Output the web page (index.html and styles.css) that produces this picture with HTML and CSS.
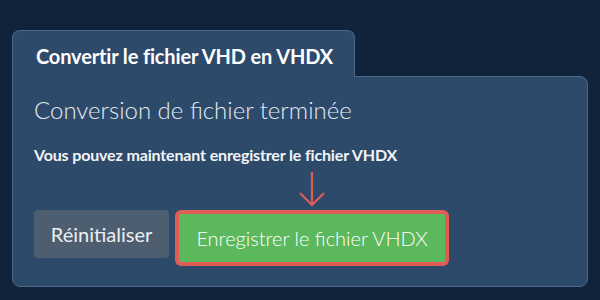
FILE: index.html
```html
<!DOCTYPE html>
<html lang="fr">
<head>
    <meta charset="UTF-8">
    <title>Convertir le fichier VHD en VHDX</title>
    <link rel="stylesheet" href="styles.css">
</head>
<body>
    <div class="converter">
        <div class="tab">Convertir le fichier VHD en VHDX</div>
        <div class="panel">
            <h2 class="status">Conversion de fichier terminée</h2>
            <p class="hint">Vous pouvez maintenant enregistrer le fichier VHDX</p>
            <div class="actions">
                <button class="btn btn-reset">Réinitialiser</button>
                <div class="save-wrap">
                    <svg class="arrow" width="28" height="36" viewBox="0 0 28 36">
                        <path d="M14 1 V34 M2 22 L14 34 L26 22" fill="none" stroke="#e05c57" stroke-width="2.2"/>
                    </svg>
                    <button class="btn btn-save">Enregistrer le fichier VHDX</button>
                </div>
            </div>
        </div>
    </div>
</body>
</html>
```

FILE: styles.css
```css
body {
    margin: 0;
    background-color: #11233a;
    font-family: Lato, "Open Sans", sans-serif;
    color: #ffffff;
    width: 600px;
    height: 300px;
    overflow: hidden;
}

.converter {
    padding: 30px 12px 0 12px;
}

.tab {
    display: inline-block;
    box-sizing: border-box;
    width: 343px;
    height: 47px;
    padding: 13px 0 0 23px;
    background-color: #2d4a6b;
    border: 1px solid #4c6788;
    border-bottom: none;
    border-radius: 8px 8px 0 0;
    font-size: 20px;
    font-weight: 700;
    letter-spacing: -0.15px;
    position: relative;
    z-index: 1;
    margin-bottom: -1px;
}

.panel {
    box-sizing: border-box;
    width: 576px;
    height: 211px;
    background-color: #2d4a6b;
    border: 1px solid #4c6788;
    border-radius: 0 8px 8px 8px;
    padding: 17px 21px 0 21px;
}

.status {
    margin: 0;
    font-size: 24px;
    font-weight: 300;
    color: #e6ebf1;
    line-height: 32px;
}

.hint {
    margin: 19px 0 0 0;
    font-size: 16px;
    font-weight: 700;
    color: #f2f4f7;
    letter-spacing: -0.15px;
}

.actions {
    display: flex;
    align-items: flex-end;
    gap: 6px;
    margin-top: 7px;
}

.save-wrap {
    display: flex;
    flex-direction: column;
    align-items: center;
}

.arrow {
    display: block;
    margin-bottom: 3px;
}

.btn {
    font-family: Lato, "Open Sans", sans-serif;
    font-size: 20px;
    font-weight: 300;
    border: none;
    color: #ffffff;
    cursor: pointer;
}

.btn-reset {
    width: 135px;
    height: 48px;
    background-color: #4d5e70;
    border-radius: 4px;
    margin-bottom: 8px;
    font-weight: 400;
    color: #eceef2;
}

.btn-save {
    width: 274px;
    height: 56px;
    background-color: #5cb85c;
    border: 4px solid #e05c57;
    border-radius: 6px;
    padding: 0;
}
```
